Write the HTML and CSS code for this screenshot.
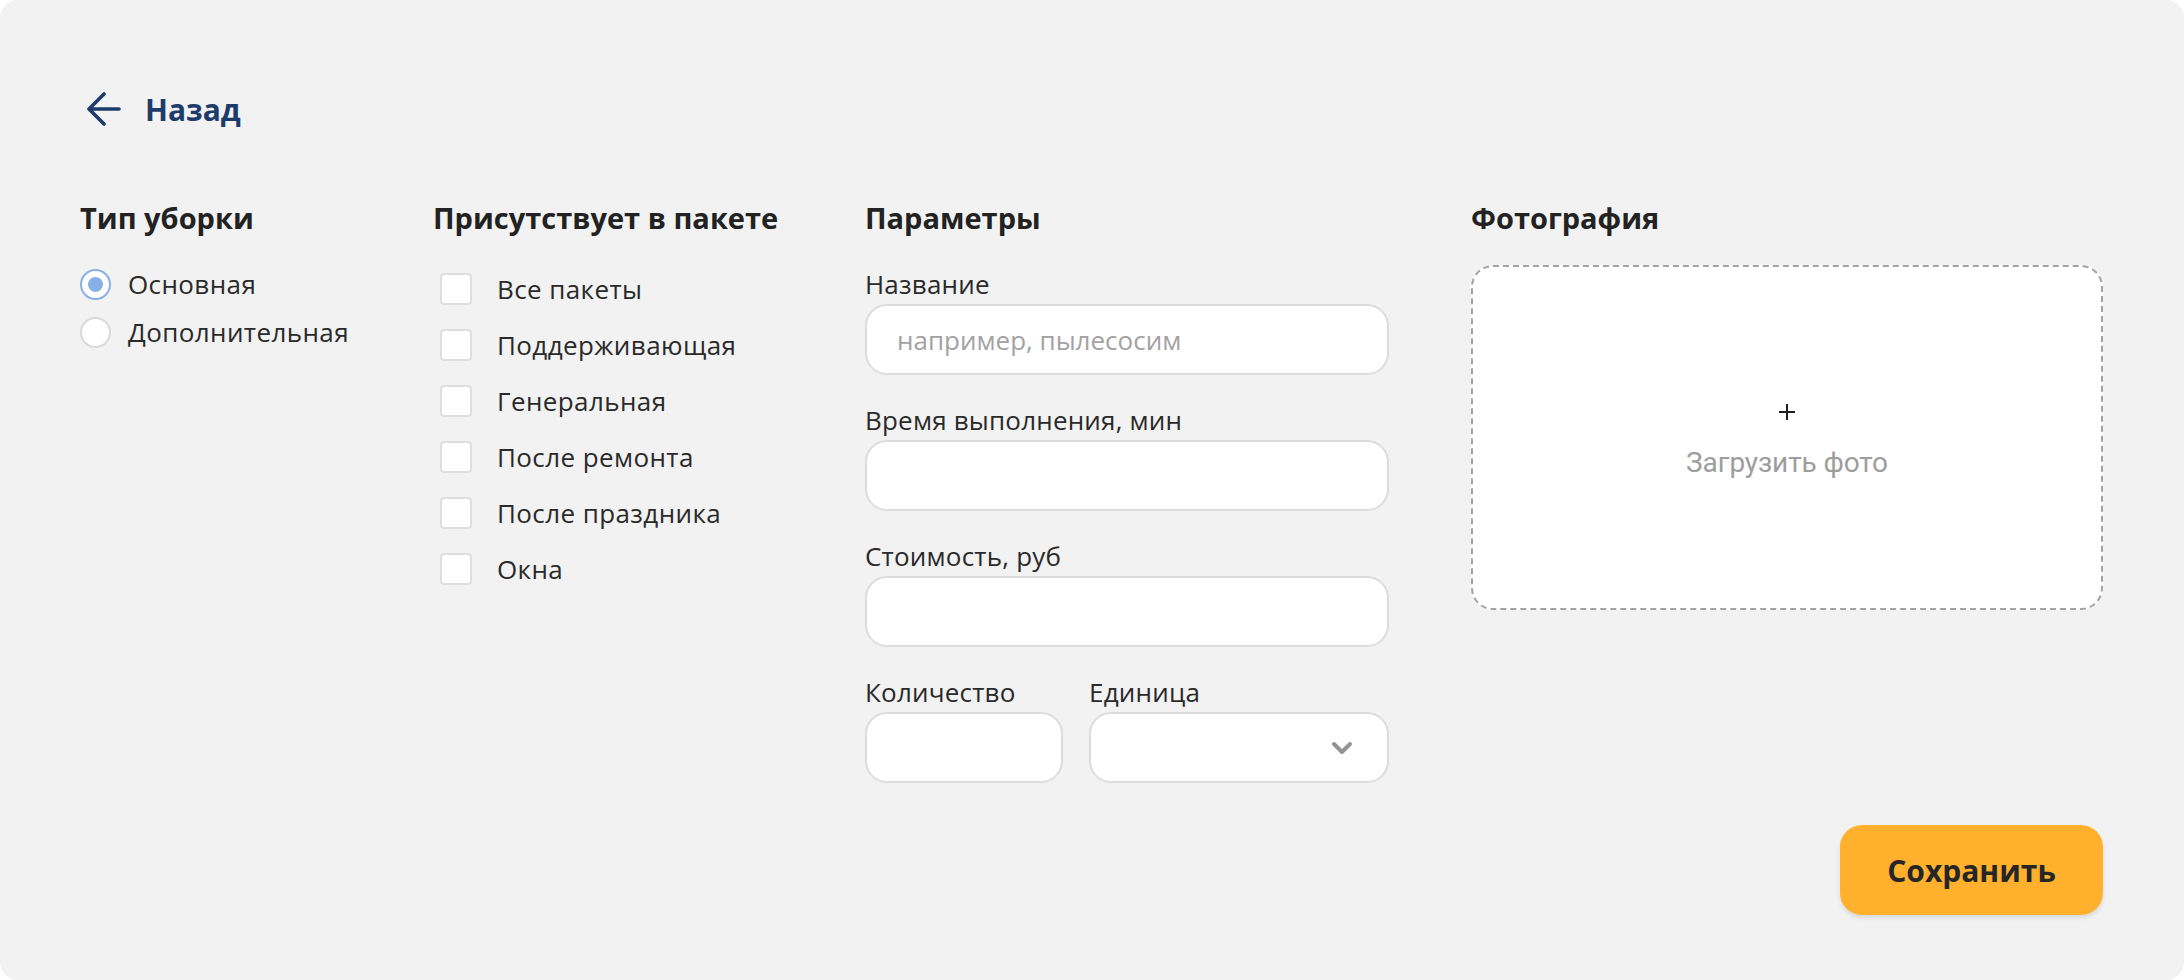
FILE: index.html
```html
<!DOCTYPE html>
<html lang="ru">
<head>
<meta charset="utf-8">
<title>Услуга уборки</title>
<link rel="stylesheet" href="styles.css">
</head>
<body>
<div class="page">
  <a class="back" href="#">
    <svg class="back-icon" width="34" height="34" viewBox="0 0 34 34" aria-hidden="true">
      <path d="M32 17H3M17 2L2 17L17 32" fill="none" stroke="currentColor" stroke-width="3.6" stroke-linecap="round" stroke-linejoin="round"/>
    </svg>
    <span>Назад</span>
  </a>

  <div class="columns">
    <section class="col col-type">
      <h2 class="col-title">Тип уборки</h2>
      <div class="radio-list">
        <label class="option"><span class="radio is-checked"></span>Основная</label>
        <label class="option"><span class="radio"></span>Дополнительная</label>
      </div>
    </section>

    <section class="col col-packages">
      <h2 class="col-title">Присутствует в пакете</h2>
      <div class="check-list">
        <label class="option check-option"><span class="checkbox"></span>Все пакеты</label>
        <label class="option check-option"><span class="checkbox"></span>Поддерживающая</label>
        <label class="option check-option"><span class="checkbox"></span>Генеральная</label>
        <label class="option check-option"><span class="checkbox"></span>После ремонта</label>
        <label class="option check-option"><span class="checkbox"></span>После праздника</label>
        <label class="option check-option"><span class="checkbox"></span>Окна</label>
      </div>
    </section>

    <section class="col col-params">
      <h2 class="col-title">Параметры</h2>
      <div class="fields">
        <div class="field">
          <label class="field-label">Название</label>
          <input class="text-input" type="text" placeholder="например, пылесосим">
        </div>
        <div class="field">
          <label class="field-label">Время выполнения, мин</label>
          <input class="text-input" type="text">
        </div>
        <div class="field">
          <label class="field-label">Стоимость, руб</label>
          <input class="text-input" type="text">
        </div>
        <div class="field-row">
          <div class="field field-qty">
            <label class="field-label">Количество</label>
            <input class="text-input" type="text">
          </div>
          <div class="field field-unit">
            <label class="field-label">Единица</label>
            <div class="text-input select">
              <svg class="chevron" width="22" height="14" viewBox="0 0 22 14" aria-hidden="true">
                <path d="M3 3L11 11L19 3" fill="none" stroke="currentColor" stroke-width="4" stroke-linecap="round" stroke-linejoin="round"/>
              </svg>
            </div>
          </div>
        </div>
      </div>
    </section>

    <section class="col col-photo">
      <h2 class="col-title">Фотография</h2>
      <div class="upload">
        <svg class="plus" width="18" height="18" viewBox="0 0 18 18" aria-hidden="true">
          <path d="M9 1V17M1 9H17" stroke="currentColor" stroke-width="2"/>
        </svg>
        <span class="upload-text">Загрузить фото</span>
      </div>
    </section>
  </div>

  <button class="save" type="button">Сохранить</button>
</div>
</body>
</html>
```

FILE: styles.css
```css
* {
  box-sizing: border-box;
}

html, body {
  margin: 0;
  padding: 0;
  background: #ffffff;
}

body {
  font-family: "Open Sans", "Noto Sans", sans-serif;
  color: #262626;
}

.page {
  width: 2184px;
  height: 980px;
  background: #f2f2f2;
  border-radius: 18px;
  padding: 88px 81px 65px 80px;
  display: flex;
  flex-direction: column;
}

/* back link */
.back {
  display: flex;
  align-items: center;
  gap: 24px;
  height: 42px;
  padding-left: 7px;
  color: #1d3c6c;
  text-decoration: none;
  font-weight: 700;
  font-size: 30px;
  align-self: flex-start;
}

.back-icon {
  display: block;
}

/* four form columns */
.columns {
  display: grid;
  grid-template-columns: 353px 432px 606px 632px;
  margin-top: 70px;
}

.col-title {
  margin: 0;
  font-size: 29px;
  line-height: 36px;
  font-weight: 700;
  color: #222222;
}

.option {
  display: flex;
  align-items: center;
  height: 32px;
  font-size: 26px;
  letter-spacing: 0.4px;
  color: #2a2a2a;
}

.radio-list {
  display: flex;
  flex-direction: column;
  gap: 16px;
  margin-top: 32px;
}

.radio {
  width: 31px;
  height: 31px;
  border-radius: 50%;
  border: 2px solid #dadada;
  background: #ffffff;
  margin-right: 17px;
  flex: none;
  display: flex;
  align-items: center;
  justify-content: center;
}

.radio.is-checked {
  border-color: #86b0e6;
}

.radio.is-checked::after {
  content: "";
  width: 15px;
  height: 15px;
  border-radius: 50%;
  background: #86b0e6;
}

.check-list {
  display: flex;
  flex-direction: column;
  gap: 24px;
  margin-top: 37px;
  padding-left: 7px;
}

.checkbox {
  width: 32px;
  height: 32px;
  border: 2px solid #dedede;
  border-radius: 4px;
  background: #ffffff;
  margin-right: 25px;
  flex: none;
}

/* parameters */
.fields {
  width: 524px;
  display: flex;
  flex-direction: column;
  gap: 29px;
  margin-top: 32px;
}

.field {
  display: flex;
  flex-direction: column;
  gap: 4px;
}

.field-label {
  font-size: 26px;
  line-height: 32px;
  letter-spacing: 0.2px;
  color: #2a2a2a;
}

.text-input {
  width: 100%;
  height: 71px;
  border: 2px solid #dcdcdc;
  border-radius: 22px;
  background: #ffffff;
  padding: 0 30px;
  font-family: inherit;
  font-size: 26px;
  color: #262626;
  outline: none;
}

.text-input::placeholder {
  color: #a2a2a2;
}

.field-row {
  display: flex;
  gap: 26px;
}

.field-qty {
  width: 198px;
}

.field-unit {
  flex: 1;
}

.select {
  display: flex;
  align-items: center;
  justify-content: flex-end;
  padding-right: 34px;
}

.chevron {
  display: block;
  color: #939393;
}

/* photo upload */
.upload {
  margin-top: 29px;
  width: 632px;
  height: 345px;
  background: #ffffff;
  border: 2px dashed #a3a3a3;
  border-radius: 22px;
  display: flex;
  flex-direction: column;
  align-items: center;
  justify-content: center;
  gap: 25px;
  padding-top: 6px;
}

.plus {
  display: block;
  color: #1f1f1f;
}

.upload-text {
  font-family: "Roboto", sans-serif;
  font-size: 28px;
  letter-spacing: -0.1px;
  color: #9d9d9d;
}

/* save button */
.save {
  margin-top: auto;
  align-self: flex-end;
  width: 263px;
  height: 90px;
  border: none;
  border-radius: 22px;
  background: #ffb12e;
  box-shadow: 0 3px 4px rgba(0, 0, 0, 0.10);
  font-family: inherit;
  font-weight: 700;
  font-size: 30px;
  color: #262626;
  cursor: pointer;
}
```
